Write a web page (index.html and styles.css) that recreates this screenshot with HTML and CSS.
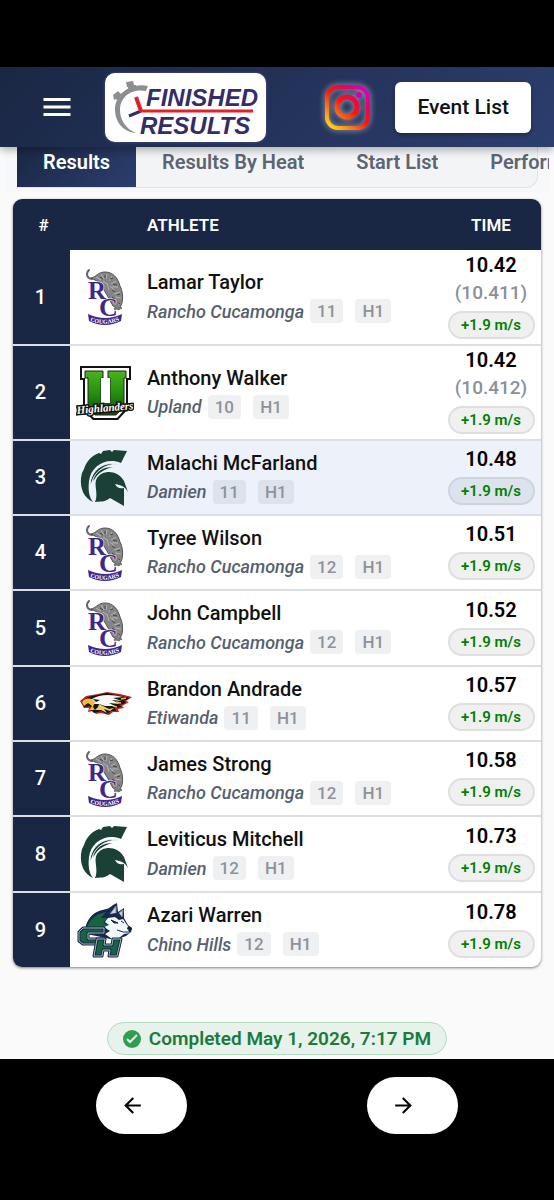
FILE: index.html
```html
<!DOCTYPE html>
<html lang="en">
<head>
  <meta charset="UTF-8">
  <meta name="viewport" content="width=device-width, initial-scale=1">
  <title>Finished Results</title>
  <link rel="stylesheet" href="styles.css">
</head>
<body>
  <svg class="gradients" aria-hidden="true">
    <linearGradient id="uplandGreen" x1="0" y1="0" x2="0" y2="1">
      <stop offset="0" stop-color="#47b51c"/>
      <stop offset="0.5" stop-color="#249010"/>
      <stop offset="1" stop-color="#124d0c"/>
    </linearGradient>
  </svg>

  <!-- school logos -->
  <svg class="sprite" aria-hidden="true">
    <symbol id="cougars" viewBox="0 0 58 58">
      <path d="M16 11C10 10 10 5 13 2" fill="none" stroke="#666" stroke-width="2" stroke-linecap="round"/>
      <path d="M15 10C20 9 22 4 29 4C37 4 42 10 44 18C47 24 47 30 46 35L43 42L37 38L31 27L23 14Z" fill="#858585" stroke="#555" stroke-width="1"/>
      <path d="M20 9l5 3M25 6l3 5M31 6l-1 5M36 8l-3 5M40 13l-5 3M42 19l-6 0M34 18l4 4M44 24l-6 2M45 30l-6-1M38 33l5 4M31 15l2 7M27 13l4 3" stroke="#b4b4b4" stroke-width="1"/>
      <path d="M24 9l3 2M29 7l0 3M34 11l3-1M37 16l4 1M36 22l3 2M41 27l3-1M36 29l4 3M42 34l2 2" stroke="#444" stroke-width="1"/>
      <path d="M38 41l8-1M37 38l6-3" stroke="#777" stroke-width="2"/>
      <text x="12" y="31" class="logo-letter" font-size="25">R</text>
      <text x="23" y="48" class="logo-letter" font-size="26">C</text>
      <path d="M12 46Q29 54 46 46L45 53Q29 61 13 53Z" fill="#40278b"/>
      <path id="banner" d="M14 53Q29 59 45 52" fill="none"/>
      <text class="banner-text"><textPath href="#banner">COUGARS</textPath></text>
    </symbol>
    <symbol id="highlanders" viewBox="0 0 58 58">
      <path d="M4 2H55V16H52V45L42 56H17L7 46V16H4Z" fill="#111"/>
      <path d="M6 4H53V14H50V44L41 54H18L9 45V14H6Z" fill="#fff"/>
      <path d="M9 7H27V14H25V39H34V14H32V7H50V14H48V43L40 51H19L12 43V14H9Z" fill="url(#uplandGreen)" stroke="#222" stroke-width="1"/>
      <path d="M25 14V39H34V14Z" fill="#fff"/>
      <text x="1" y="50" class="script-text" transform="rotate(-5 2 50)">Highlanders</text>
    </symbol>
    <symbol id="spartan" viewBox="0 0 58 58">
      <path d="M34 1L36 3L38 1L51 2L45 14C30 8 15 17 13 32C12 41 13 48 17 53C8 49 4 40 5 29L6 24L8 20C10 13 15 7 23 4L25 5L27 2Z" fill="#1b4036"/>
      <path d="M14 36C15 21 27 12 43 15C29 15 19 22 16 33Z" fill="#1b4036" stroke="#ecf1fa" stroke-width="1"/>
      <path d="M17 32C20 22 27 18 37 18C28 20 22 24 18 31Z" fill="#1b4036"/>
      <path d="M19 53C23 45 17 35 21 29C27 20 42 21 48 32L52 43C49 38 46 36 39 35C41 39 44 40 48 39L48 57L34 49C28 54 24 52 19 53Z" fill="#1b4036"/>
    </symbol>
    <symbol id="eagle" viewBox="0 0 58 58">
      <path d="M4 26L10 21L22 19L31 17L44 19L56 22L50 26L53 27L46 31L48 33L42 34L43 37L37 37L33 40L25 38L20 39L17 36L12 37L13 33L8 33Z" fill="#c91c25"/>
      <path d="M6 26L12 22L31 18L54 23L48 26L50 28L43 30L46 32L39 33L40 36L35 36L31 39L25 36L18 38L15 35L14 31L8 32Z" fill="#151515"/>
      <path d="M16 24Q27 17 47 22L37 23L46 26L36 25L44 29L33 28L39 31L29 31L23 29L17 29Z" fill="#f7f7f2"/>
      <path d="M6 27Q9 22 16 24L19 27L17 32L19 35L13 35L16 31L12 28L8 31Z" fill="#edbd3d"/>
      <path d="M23 29L33 34L38 33L34 36L28 34L31 38L25 35L19 35L22 32Z" fill="#efcb62"/>
      <path d="M17 24L24 25L20 27Z" fill="#151515"/>
      <path d="M45 24l5-1M40 27l5 1M37 31l4 1" stroke="#edbd3d" stroke-width="1.5"/>
    </symbol>
    <symbol id="huskies" viewBox="0 0 58 58">
      <path d="M9 28C11 18 17 12 23 10C30 8 33 8 37 4L41 2L42 11L48 7L48 17L52 24L56 27L55 31L50 35L39 39L25 36L11 33Z" fill="#16284d"/>
      <path d="M11 27C13 18 20 13 30 11L25 17L32 17L27 22L33 24L22 27Z" fill="#176441"/>
      <path d="M34 13L40 5L40 12M43 12L47 9L46 16" fill="#c9d5dc" stroke="#7893a1" stroke-width="1"/>
      <path d="M32 17L39 16L43 19L47 18L51 24L55 28L52 29L54 32L48 33L43 37L36 38L29 33L34 30L28 26L33 24L29 21Z" fill="#f4f7fa"/>
      <path d="M35 19L42 22L38 22ZM45 20l3 2" fill="#16284d" stroke="#16284d" stroke-width="1"/>
      <path d="M41 29Q47 32 54 31" fill="none" stroke="#16284d" stroke-width="1"/>
      <path d="M52 25L56 27L55 30L51 28Z" fill="#14213d"/>
      <g stroke-linejoin="round">
        <path d="M7 27H28V32H12V38H28V43H7L3 40V31Z" fill="#176441" stroke="#16284d" stroke-width="3"/>
        <path d="M7 27H28V32H12V38H28V43H7L3 40V31Z" fill="none" stroke="#a6b4b7" stroke-width="1"/>
        <path d="M21 38H29L28 44H36L37 38H45L41 55H33L34 49H27L26 55H18Z" fill="#176441" stroke="#16284d" stroke-width="3"/>
        <path d="M21 38H29L28 44H36L37 38H45L41 55H33L34 49H27L26 55H18Z" fill="none" stroke="#a6b4b7" stroke-width="1"/>
      </g>
    </symbol>
  </svg>

  <div class="status-bar"></div>

  <header class="app-bar">
    <button class="menu-btn" aria-label="Menu">
      <svg viewBox="0 0 24 24"><path d="M3 18h18v-2H3v2zm0-5h18v-2H3v2zm0-7v2h18V6H3z"/></svg>
    </button>
    <a href="#" class="brand" aria-label="Finished Results">
      <svg viewBox="0 0 161 69">
        <path d="M43 13C25 9 10 22 10 36C10 51 20 59 31 60C21 56 15 47 15 37C15 25 25 15 41 18Z" fill="#8b8f92"/>
        <path d="M21 9L28 8L29 12L31 12L32 17L24 19L23 14L22 14ZM8 22L13 18L16 21L17 20L20 24L14 29L11 26L9 27Z" fill="#8b8f92"/>
        <path d="M24 43L36 38" stroke="#332d69" stroke-width="3"/>
        <path d="M31 24L36 38" stroke="#e3212b" stroke-width="4"/>
        <path d="M35 38H148" stroke="#e3212b" stroke-width="3"/>
        <text x="41" y="33" class="brand-text">FINISHED</text>
        <text x="35" y="61" class="brand-text">RESULTS</text>
      </svg>
    </a>
    <a href="#" class="instagram" aria-label="Instagram">
      <svg viewBox="0 0 48 48">
        <defs>
          <linearGradient id="insta" gradientUnits="userSpaceOnUse" x1="7" y1="44" x2="41" y2="4">
            <stop offset="0" stop-color="#ffd21c"/>
            <stop offset="0.25" stop-color="#ff7a10"/>
            <stop offset="0.5" stop-color="#ff1408"/>
            <stop offset="0.75" stop-color="#f00058"/>
            <stop offset="1" stop-color="#d800c4"/>
          </linearGradient>
        </defs>
        <rect x="4" y="4" width="41" height="41" rx="11" fill="none" stroke="url(#insta)" stroke-width="4"/>
        <circle cx="24" cy="24" r="10" fill="none" stroke="url(#insta)" stroke-width="5"/>
        <circle cx="36" cy="12" r="3" fill="#d900a8"/>
      </svg>
    </a>
    <button class="event-btn">Event List</button>
  </header>

  <main>
    <div class="tabs-wrap">
      <nav class="tabs">
        <a href="#" class="tab active">Results</a>
        <a href="#" class="tab">Results By Heat</a>
        <a href="#" class="tab">Start List</a>
        <a href="#" class="tab">Performance List</a>
      </nav>
    </div>

    <div class="table-card">
      <table>
        <colgroup>
          <col class="col-place">
          <col class="col-logo">
          <col>
          <col class="col-time">
        </colgroup>
        <thead>
          <tr><th class="num">#</th><th></th><th class="left">ATHLETE</th><th>TIME</th></tr>
        </thead>
        <tbody>
          <tr>
            <td class="place">1</td>
            <td class="logo"><svg><use href="#cougars"/></svg></td>
            <td class="athlete"><div class="name">Lamar Taylor</div><div class="info"><em>Rancho Cucamonga</em><span class="chip">11</span><span class="chip heat">H1</span></div></td>
            <td class="time"><div>10.42</div><div class="exact">(10.411)</div><span class="wind">+1.9 m/s</span></td>
          </tr>
          <tr>
            <td class="place">2</td>
            <td class="logo"><svg><use href="#highlanders"/></svg></td>
            <td class="athlete"><div class="name">Anthony Walker</div><div class="info"><em>Upland</em><span class="chip">10</span><span class="chip heat">H1</span></div></td>
            <td class="time"><div>10.42</div><div class="exact">(10.412)</div><span class="wind">+1.9 m/s</span></td>
          </tr>
          <tr class="selected">
            <td class="place">3</td>
            <td class="logo"><svg><use href="#spartan"/></svg></td>
            <td class="athlete"><div class="name">Malachi McFarland</div><div class="info"><em>Damien</em><span class="chip">11</span><span class="chip heat">H1</span></div></td>
            <td class="time"><div>10.48</div><span class="wind">+1.9 m/s</span></td>
          </tr>
          <tr>
            <td class="place">4</td>
            <td class="logo"><svg><use href="#cougars"/></svg></td>
            <td class="athlete"><div class="name">Tyree Wilson</div><div class="info"><em>Rancho Cucamonga</em><span class="chip">12</span><span class="chip heat">H1</span></div></td>
            <td class="time"><div>10.51</div><span class="wind">+1.9 m/s</span></td>
          </tr>
          <tr>
            <td class="place">5</td>
            <td class="logo"><svg><use href="#cougars"/></svg></td>
            <td class="athlete"><div class="name">John Campbell</div><div class="info"><em>Rancho Cucamonga</em><span class="chip">12</span><span class="chip heat">H1</span></div></td>
            <td class="time"><div>10.52</div><span class="wind">+1.9 m/s</span></td>
          </tr>
          <tr>
            <td class="place">6</td>
            <td class="logo"><svg><use href="#eagle"/></svg></td>
            <td class="athlete"><div class="name">Brandon Andrade</div><div class="info"><em>Etiwanda</em><span class="chip">11</span><span class="chip heat">H1</span></div></td>
            <td class="time"><div>10.57</div><span class="wind">+1.9 m/s</span></td>
          </tr>
          <tr>
            <td class="place">7</td>
            <td class="logo"><svg><use href="#cougars"/></svg></td>
            <td class="athlete"><div class="name">James Strong</div><div class="info"><em>Rancho Cucamonga</em><span class="chip">12</span><span class="chip heat">H1</span></div></td>
            <td class="time"><div>10.58</div><span class="wind">+1.9 m/s</span></td>
          </tr>
          <tr>
            <td class="place">8</td>
            <td class="logo"><svg><use href="#spartan"/></svg></td>
            <td class="athlete"><div class="name">Leviticus Mitchell</div><div class="info"><em>Damien</em><span class="chip">12</span><span class="chip heat">H1</span></div></td>
            <td class="time"><div>10.73</div><span class="wind">+1.9 m/s</span></td>
          </tr>
          <tr>
            <td class="place">9</td>
            <td class="logo"><svg><use href="#huskies"/></svg></td>
            <td class="athlete"><div class="name">Azari Warren</div><div class="info"><em>Chino Hills</em><span class="chip">12</span><span class="chip heat">H1</span></div></td>
            <td class="time"><div>10.78</div><span class="wind">+1.9 m/s</span></td>
          </tr>
        </tbody>
      </table>
    </div>

    <div class="completed">
      <svg viewBox="0 0 18 18"><circle cx="9" cy="9" r="9" fill="#2e9e50"/><path d="M4 9L7 12L14 5" fill="none" stroke="#e6f2ea" stroke-width="2"/></svg>
      <span>Completed May 1, 2026, 7:17 PM</span>
    </div>
  </main>

  <footer class="pager">
    <button aria-label="Previous event">
      <svg viewBox="0 0 24 24"><path d="M20 11H7.83l5.59-5.59L12 4l-8 8 8 8 1.41-1.41L7.83 13H20v-2z"/></svg>
    </button>
    <button aria-label="Next event">
      <svg viewBox="0 0 24 24"><path d="M12 4l-1.41 1.41L16.17 11H4v2h12.17l-5.58 5.59L12 20l8-8z"/></svg>
    </button>
  </footer>
</body>
</html>
```
FILE: styles.css
```css
* {
  box-sizing: border-box;
}
body {
  margin: 0;
  min-height: 100vh;
  display: flex;
  flex-direction: column;
  font-family: Roboto, sans-serif;
  background: #000;
  color: #111;
  overflow-x: hidden;
}
button {
  border: none;
  background: #fff;
  font-family: inherit;
  cursor: pointer;
}
a {
  color: inherit;
  text-decoration: none;
}
svg {
  display: block;
}
.sprite {
  display: none;
}
.gradients {
  position: absolute;
  width: 0;
  height: 0;
}
.status-bar {
  height: 67px;
}

/* top bar */
.app-bar {
  position: relative;
  z-index: 2;
  display: flex;
  align-items: center;
  height: 80px;
  padding: 0 23px 0 39px;
  background: linear-gradient(135deg, #1a2744, #2c3e6e);
  box-shadow: 0 3px 8px rgba(0, 0, 0, 0.3);
}
.menu-btn {
  padding: 0;
  background: none;
}
.menu-btn svg {
  width: 36px;
  height: 36px;
  fill: #fff;
}
.brand {
  width: 161px;
  margin-left: 30px;
  background: #fff;
  border-radius: 10px;
  box-shadow: 0 0 3px #5a5a9a;
}
.brand-text {
  font: italic bold 24px "Liberation Sans", sans-serif;
  fill: #332d69;
}
.instagram {
  margin-left: auto;
  margin-right: 24px;
  filter: drop-shadow(0 0 3px rgba(255, 255, 255, 0.6));
}
.instagram svg {
  width: 48px;
  height: 48px;
}
.event-btn {
  padding: 0 22px;
  border-radius: 6px;
  font-size: 21px;
  font-weight: 500;
  line-height: 51px;
  color: #111;
  box-shadow: 0 2px 4px rgba(0, 0, 0, 0.3);
}

/* content */
main {
  flex: 1;
  display: flex;
  flex-direction: column;
  background: #fafafa;
  padding-bottom: 4px;
}
.tabs-wrap {
  margin: 0 5px;
  padding: 0 11px 4px 12px;
  background: #f7f8f9;
  overflow: hidden;
}
.tabs {
  display: flex;
  height: 41px;
  background: #f3f4f6;
  border: 1px solid #dfe2e7;
  border-width: 0 1px 1px 0;
  border-radius: 0 0 12px 0;
}
.tab {
  flex: none;
  padding: 0 26px;
  font-size: 20px;
  font-weight: 600;
  line-height: 30px;
  color: #5d6472;
}
.tab.active {
  background: linear-gradient(135deg, #1a2744, #2c3e6e);
  color: #fff;
}

.table-card {
  margin: 7px 13px 0;
  border-radius: 9px;
  overflow: hidden;
  background: #fff;
  box-shadow: 0 1px 3px rgba(0, 0, 0, 0.5);
}
table {
  width: 100%;
  table-layout: fixed;
  border-collapse: collapse;
}
.col-place {
  width: 57px;
}
.col-logo {
  width: 70px;
}
.col-time {
  width: 100px;
}
th {
  height: 51px;
  padding: 0;
  background: #1a2744;
  color: #fff;
  font-size: 17px;
  font-weight: 600;
}
th.num {
  padding-left: 4px;
}
th.left {
  padding-left: 7px;
  text-align: left;
}
td {
  height: 75px;
  padding: 0;
  border-bottom: 2px solid #dcdee2;
}
tr:nth-child(3n+2) td {
  height: 76px;
}
tr:first-child td {
  height: 95px;
}
tr:last-child td {
  border-bottom: none;
}
.selected {
  background: #ecf1fa;
}
.place {
  padding-right: 2px;
  padding-bottom: 1px;
  background: #1a2744;
  color: #fff;
  font-size: 20px;
  font-weight: 500;
  text-align: center;
}
.logo svg {
  width: 58px;
  height: 58px;
  margin: 0 auto;
}
.logo-letter {
  font-family: "Liberation Serif", serif;
  font-weight: bold;
  fill: #40278b;
  stroke: #fff;
  stroke-width: 1px;
  paint-order: stroke;
}
.banner-text {
  font: bold 6px "Liberation Serif", serif;
  fill: #fff;
}
.script-text {
  font: italic bold 11px "Liberation Serif", serif;
  fill: #fff;
  stroke: #111;
  stroke-width: 3px;
  paint-order: stroke;
}
.athlete {
  padding-left: 7px;
  padding-bottom: 2px;
}
.name {
  font-size: 20px;
  font-weight: 500;
  line-height: 30px;
  white-space: nowrap;
}
.info {
  display: flex;
  align-items: center;
  height: 28px;
  color: #565f6e;
  font-size: 18px;
  font-weight: 500;
  white-space: nowrap;
}
.chip {
  min-width: 33px;
  margin-left: 6px;
  padding: 0 7px;
  border-radius: 4px;
  background: rgba(26, 39, 68, 0.07);
  color: #8d929b;
  font-size: 17px;
  line-height: 24px;
  text-align: center;
}
.heat {
  min-width: 36px;
  margin-left: 12px;
}
.time {
  padding-bottom: 5px;
  color: #000;
  font-size: 20px;
  font-weight: 600;
  line-height: 28px;
  text-align: center;
}
.exact {
  color: #8a909c;
  font-size: 19px;
  font-weight: 500;
}
.wind {
  display: block;
  width: 87px;
  margin: 4px auto 0;
  border: 2px solid #dfdfdf;
  border-radius: 14px;
  background: #f0f0f0;
  color: #008000;
  font-size: 15px;
  line-height: 24px;
}
.selected .chip {
  background: #dde3ec;
}
.selected .wind {
  background: #dde3ec;
  border-color: #cfd4dc;
}

.completed {
  display: flex;
  align-items: center;
  gap: 8px;
  margin: auto auto 0;
  padding: 0 15px;
  border: 1px solid #b5dac2;
  border-radius: 17px;
  background: #e6f2ea;
  color: #1b7b3e;
  font-size: 19px;
  font-weight: 600;
  line-height: 31px;
}
.completed svg {
  width: 18px;
  height: 18px;
}

/* prev / next */
.pager {
  display: flex;
  justify-content: space-between;
  padding: 18px 96px 66px;
}
.pager button {
  width: 91px;
  height: 57px;
  padding: 0 18px 0 0;
  border-radius: 29px;
}
.pager svg {
  width: 25px;
  height: 25px;
  margin: 0 auto;
}
```
